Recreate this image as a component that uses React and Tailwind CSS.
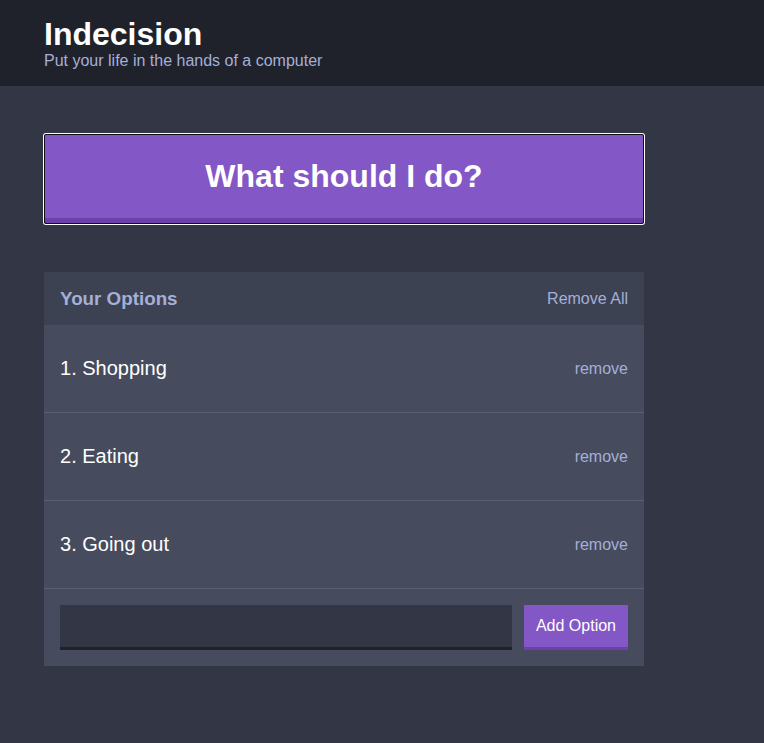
import { useState } from 'react';

const FONT = "font-['Liberation_Sans',Arial,Helvetica,sans-serif]";

export default function App() {
  const [options, setOptions] = useState(['Shopping', 'Eating', 'Going out']);
  const [text, setText] = useState('');

  const addOption = (e) => {
    e.preventDefault();
    if (!text.trim()) return;
    setOptions([...options, text.trim()]);
    setText('');
  };

  return (
    <div className={`min-h-screen bg-[#333745] ${FONT}`}>
      <header className="bg-[#20222b] py-4 pl-[44px]">
        <h1 className="text-[32px] leading-[36px] font-bold text-white">Indecision</h1>
        <h2 className="text-[16px] leading-[18px] font-medium text-[#a5afd7]">Put your life in the hands of a computer</h2>
      </header>

      <div className="pl-[44px] pt-12">
        <div className="w-[600px]">
          <button
            disabled={options.length === 0}
            className="block w-full h-[90px] mb-12 bg-[#8357c5] border-b-[6px] border-[#6b40ab] rounded-[2px] text-white font-bold text-[32px] leading-[36px] outline-1 outline-[#101010] -outline-offset-1 shadow-[0_0_0_1px_#ffffff]"
          >
            What should I do?
          </button>

          <div className="bg-[#464b5e]">
            <div className="flex items-center justify-between bg-[#3c4251] px-4 pt-[17px] pb-4">
              <h3 className="text-[18.8px] leading-[20px] font-bold text-[#a5afd7]">Your Options</h3>
              <button onClick={() => setOptions([])} className="text-[16px] leading-[18px] text-[#a5afd7]">Remove All</button>
            </div>

            {options.map((option, i) => (
              <div key={option + i} className="flex items-center justify-between p-4 border-b border-[#595e75]">
                <p className="my-4 text-[20px] leading-[23px] text-white font-medium">{i + 1}. {option}</p>
                <button
                  onClick={() => setOptions(options.filter((_, idx) => idx !== i))}
                  className="text-[16px] leading-[18px] text-[#a5afd7]"
                >
                  remove
                </button>
              </div>
            ))}

            <form onSubmit={addOption} className="flex p-4">
              <input
                value={text}
                onChange={e => setText(e.target.value)}
                className="flex-1 mr-3 h-[45px] px-3 bg-[#333745] border-b-[3px] border-[#1f2029] text-[16px] text-[#a5afd7] outline-none"
              />
              <button className="h-[45px] px-3 bg-[#8357c5] border-b-[3px] border-[#6b40ab] text-white text-[16px] leading-[18px] font-medium">
                Add Option
              </button>
            </form>
          </div>
        </div>
      </div>
    </div>
  );
}
